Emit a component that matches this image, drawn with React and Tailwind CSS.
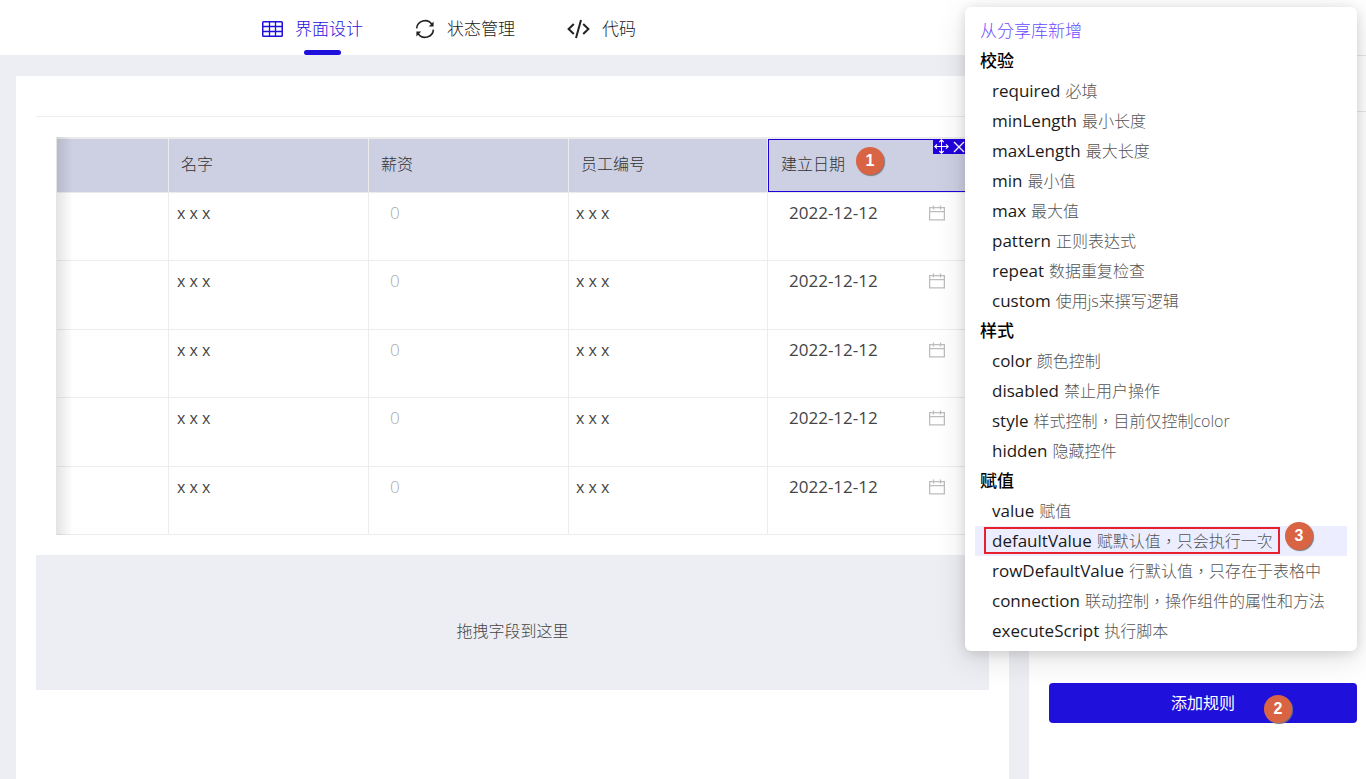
import React from "react";

const columns = [
  ["名字", "w-[200px]"],
  ["薪资", "w-[200px]"],
  ["员工编号", "w-[199px]"],
];
const rows = [1, 2, 3, 4, 5];

const ruleGroups = [
  {
    title: "校验",
    items: [
      ["required", "必填"],
      ["minLength", "最小长度"],
      ["maxLength", "最大长度"],
      ["min", "最小值"],
      ["max", "最大值"],
      ["pattern", "正则表达式"],
      ["repeat", "数据重复检查"],
      ["custom", "使用js来撰写逻辑"],
    ],
  },
  {
    title: "样式",
    items: [
      ["color", "颜色控制"],
      ["disabled", "禁止用户操作"],
      ["style", "样式控制，目前仅控制color"],
      ["hidden", "隐藏控件"],
    ],
  },
  {
    title: "赋值",
    items: [
      ["value", "赋值"],
      ["defaultValue", "赋默认值，只会执行一次"],
      ["rowDefaultValue", "行默认值，只存在于表格中"],
      ["connection", "联动控制，操作组件的属性和方法"],
      ["executeScript", "执行脚本"],
    ],
  },
];

function GridIcon() {
  return (
    <svg width="21" height="16" viewBox="0 0 21 16" fill="none" stroke="currentColor" aria-hidden="true">
      <rect x="0.75" y="0.75" width="19.5" height="14.5" rx="0.8" strokeWidth="1.5" />
      <path d="M1 5.5h19M1 10.5h19M7.5 1v14M13.5 1v14" strokeWidth="1.3" />
    </svg>
  );
}

function SyncIcon() {
  return (
    <svg width="20" height="20" viewBox="0 0 20 20" fill="none" stroke="currentColor" strokeWidth="1.6" aria-hidden="true">
      <path d="M1.6 9.4A8.4 8.4 0 0 1 16.8 5.2M18.4 10.6A8.4 8.4 0 0 1 3.2 14.8" />
      <path d="M18.6 2.6v4.8h-4.8zM1.4 17.4v-4.8h4.8z" fill="currentColor" stroke="none" />
    </svg>
  );
}

function CodeIcon() {
  return (
    <svg width="23" height="20" viewBox="0 0 23 20" fill="none" stroke="currentColor" strokeWidth="2" aria-hidden="true">
      <path d="M6.8 5L1.6 10L6.8 15M16.2 5L21.4 10L16.2 15M14 1L9 19" />
    </svg>
  );
}

function CalendarIcon() {
  return (
    <svg width="16" height="16" viewBox="0 0 16 16" fill="none" stroke="currentColor" strokeWidth="1.3" aria-hidden="true">
      <path d="M0.6 2.6h14.8v12.2H0.6zM0.6 6.6h14.8M4.5 0.6v4M11.5 0.6v4" />
    </svg>
  );
}

function MoveIcon() {
  return (
    <svg width="15" height="15" viewBox="0 0 15 15" fill="none" stroke="currentColor" strokeWidth="1.1" aria-hidden="true">
      <path d="M7.5 0.8v13.4M0.8 7.5h13.4M5.3 3l2.2-2.2L9.7 3M5.3 12l2.2 2.2L9.7 12M3 5.3L0.8 7.5L3 9.7M12 5.3l2.2 2.2L12 9.7" />
    </svg>
  );
}

function CloseIcon() {
  return (
    <svg width="12" height="12" viewBox="0 0 12 12" fill="none" stroke="currentColor" strokeWidth="1.4" aria-hidden="true">
      <path d="M1 1l10 10M11 1L1 11" />
    </svg>
  );
}

function Badge({ n, className }) {
  return (
    <span
      className={
        "absolute flex size-7 items-center justify-center rounded-full bg-[#d96443] font-['Liberation_Sans',sans-serif] text-base font-bold text-white shadow-[1px_1px_1px_#777] " +
        className
      }
    >
      {n}
    </span>
  );
}

function Tab({ icon, label, active }) {
  return (
    <button
      type="button"
      className={
        "relative flex h-full items-center gap-3 pt-[3px] text-[17px] " + (active ? "text-[#1f10db]" : "text-[#222]")
      }
    >
      {icon}
      <span>{label}</span>
      {active && <span className="absolute bottom-0 left-[42px] h-[5px] w-[37px] rounded-full bg-[#1f10db]" />}
    </button>
  );
}

function FieldTable() {
  return (
    <div className="relative mt-5 mx-5 border-l border-[#e4e4e4]">
      <table className="w-full table-fixed border-separate border-spacing-0 text-[#444]">
        <thead>
          <tr className="h-14 bg-[#cdcfe2] text-left text-base text-[#333]">
            <th className="border-b border-r border-t-2 border-[#ebebeb]" aria-label="序号" />
            {columns.map(([name, width]) => (
              <th key={name} className={"border-b border-r border-t-2 border-[#ebebeb] px-3 pb-[3px] font-light " + width}>
                {name}
              </th>
            ))}
            <th className="relative w-[201px] border-b border-t-2 border-[#ebebeb] px-[13px] pb-[3px] font-light">
              建立日期
              <span className="pointer-events-none absolute inset-0 border border-[#1f00db]" />
              <Badge n={1} className="left-[88px] top-2" />
              <span className="absolute right-0 top-0 flex h-[15px] items-center gap-1 bg-[#2200dd] pl-px text-white">
                <button type="button" aria-label="移动">
                  <MoveIcon />
                </button>
                <button type="button" aria-label="删除" className="pr-1">
                  <CloseIcon />
                </button>
              </span>
            </th>
          </tr>
        </thead>
        <tbody>
          {rows.map((r) => (
            <tr key={r} className="h-[68px] align-top text-[17px] even:h-[69px]">
              <td className="border-b border-r border-[#ececec]" />
              <td className="border-b border-r border-[#ececec] px-2 pt-2 text-base">x x x</td>
              <td className="border-b border-r border-[#ececec] px-[21px] pt-[7px]">
                <input
                  aria-label={"薪资 " + r}
                  placeholder="0"
                  className="w-full font-light outline-none placeholder:text-[#aaa]"
                />
              </td>
              <td className="border-b border-r border-[#ececec] px-[7px] pt-2 text-base">x x x</td>
              <td className="border-b border-r border-[#ececec] pl-[21px] pr-[23px] pt-[7px]">
                <label className="flex items-center justify-between text-[#bdbdbd]">
                  <input
                    aria-label={"建立日期 " + r}
                    defaultValue="2022-12-12"
                    className="w-28 text-[#444] outline-none"
                  />
                  <CalendarIcon />
                </label>
              </td>
            </tr>
          ))}
        </tbody>
      </table>
      <div className="pointer-events-none absolute inset-y-0 left-0 w-4 bg-linear-to-r from-black/10 to-transparent" />
    </div>
  );
}

function RuleMenu() {
  return (
    <div className="absolute right-[9px] top-[7px] w-[392px] rounded-md bg-white px-[10px] pb-[5px] pt-[9px] text-[17px] leading-[30px] text-[#1a1a1a] shadow-[0_8px_32px_rgba(0,0,0,0.12),0_2px_12px_rgba(0,0,0,0.12)]">
      <a href="#library" className="block px-[5px] font-light text-[#6a4cff]">
        从分享库新增
      </a>
      {ruleGroups.map((g) => (
        <section key={g.title}>
          <h3 className="px-[5px] font-medium text-black">{g.title}</h3>
          <ul>
            {g.items.map(([name, desc]) => {
              const current = name === "defaultValue";
              return (
                <li key={name} className={"relative h-[30px] " + (current ? "bg-[#eceeff]" : "")}>
                  <button type="button" className="flex w-full items-center gap-[5px] whitespace-nowrap pl-[17px]">
                    <span>{name}</span>
                    <span className="text-base/[30px] font-light text-[#555]">{desc}</span>
                  </button>
                  {current && (
                    <>
                      <span className="pointer-events-none absolute left-[9px] top-px h-[27px] w-[296px] border-2 border-[#e8202e]" />
                      <Badge n={3} className="left-[310px] -top-1" />
                    </>
                  )}
                </li>
              );
            })}
          </ul>
        </section>
      ))}
    </div>
  );
}

export default function App() {
  return (
    <div className="relative flex min-h-screen flex-col overflow-hidden bg-[#edeef3] font-['Open_Sans','Noto_Sans_CJK_TC',sans-serif]">
      <header className="h-[55px] bg-white">
        <nav className="flex h-full gap-[52px] pl-[262px] font-light">
          <Tab icon={<GridIcon />} label="界面设计" active />
          <Tab icon={<SyncIcon />} label="状态管理" />
          <Tab icon={<CodeIcon />} label="代码" />
        </nav>
      </header>
      <div className="flex flex-1 gap-5 pl-4">
        <main className="mt-[21px] flex-1 bg-white px-5">
          <div className="h-[41px] border-b border-[#ececec]" />
          <FieldTable />
          <div className="mt-5 flex h-[135px] items-center justify-center bg-[#edeef3] pt-4 text-base font-light text-[#444]">
            拖拽字段到这里
          </div>
        </main>
        <aside className="w-[337px] bg-white">
          <div className="h-[57px] border-y border-[#e6e6e6]" />
          <div className="pl-5 pr-[9px] pt-[571px]">
            <button type="button" className="relative h-10 w-full rounded bg-[#1f10db] text-base text-white">
              添加规则
              <Badge n={2} className="right-[65px] top-3" />
            </button>
          </div>
        </aside>
      </div>
      <RuleMenu />
    </div>
  );
}
